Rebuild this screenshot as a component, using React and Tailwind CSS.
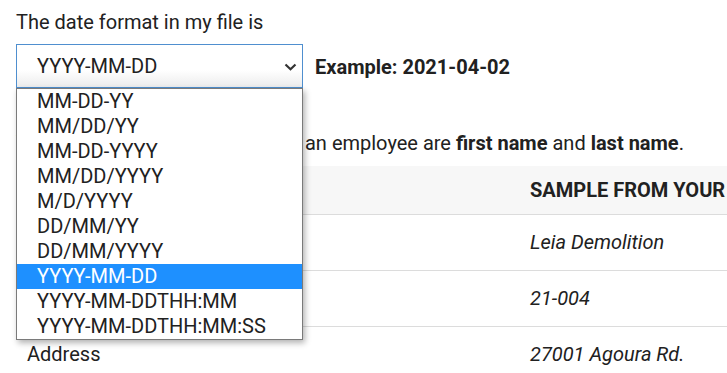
import React from "react";

const FORMATS = [
  "MM-DD-YY",
  "MM/DD/YY",
  "MM-DD-YYYY",
  "MM/DD/YYYY",
  "M/D/YYYY",
  "DD/MM/YY",
  "DD/MM/YYYY",
  "YYYY-MM-DD",
  "YYYY-MM-DDTHH:MM",
  "YYYY-MM-DDTHH:MM:SS",
];

const ROWS = [
  { field: "Name", sample: "Leia Demolition" },
  { field: "Employee ID", sample: "21-004" },
  { field: "Address", sample: "27001 Agoura Rd." },
];

export default function App() {
  const selected = "YYYY-MM-DD";

  return (
    <div className="relative w-[727px] h-[373px] overflow-hidden bg-white text-[#212121] font-['Roboto',sans-serif] text-[20px]">
      <div className="w-[900px] pl-4 pt-[6px]">
        <p className="leading-[32px]">The date format in my file is</p>

        {/* Select row */}
        <div className="mt-[6px] flex items-center gap-3">
          <div className="w-[287px] h-[44px] flex items-center justify-between pl-[20px] pr-[5px] border border-[#4f8fcf] bg-gradient-to-b from-white from-60% to-[#ececec]">
            <span>{selected}</span>
            <svg width="13" height="8" viewBox="0 0 13 8" className="mt-[1px]">
              <polyline points="1.5,1.5 6.5,6.2 11.5,1.5" fill="none" stroke="#333" strokeWidth="2.2" />
            </svg>
          </div>
          <span className="font-bold mt-[1px]">Example: 2021-04-02</span>
        </div>

        <p className="mt-[43px] leading-[24px]">
          The minimum required fields for an employee are <b>first name</b> and <b>last name</b>.
        </p>

        {/* Table */}
        <table className="mt-[11px] w-[860px] border-collapse">
          <thead>
            <tr className="bg-[#f7f7f7] border-b border-[#dcdcdc]">
              <th className="h-[48px] px-[11px] text-left font-bold w-[503px]">FIELD</th>
              <th className="h-[48px] px-[11px] text-left font-bold">SAMPLE FROM YOUR FILE</th>
            </tr>
          </thead>
          <tbody>
            {ROWS.map((row) => (
              <tr key={row.field} className="border-b border-[#dcdcdc]">
                <td className="h-[56px] px-[11px]">{row.field}</td>
                <td className="h-[56px] px-[11px] italic">{row.sample}</td>
              </tr>
            ))}
          </tbody>
        </table>
      </div>

      {/* Open dropdown list */}
      <ul className="absolute left-4 top-[88px] w-[287px] bg-white border border-[#7a7a7a] shadow-[2px_3px_6px_rgba(0,0,0,0.3)]">
        {FORMATS.map((f) => (
          <li
            key={f}
            className={`h-[25px] leading-[25px] pl-[20px] ${
              f === selected ? "bg-[#1e90ff] text-white" : ""
            }`}
          >
            {f}
          </li>
        ))}
      </ul>
    </div>
  );
}
